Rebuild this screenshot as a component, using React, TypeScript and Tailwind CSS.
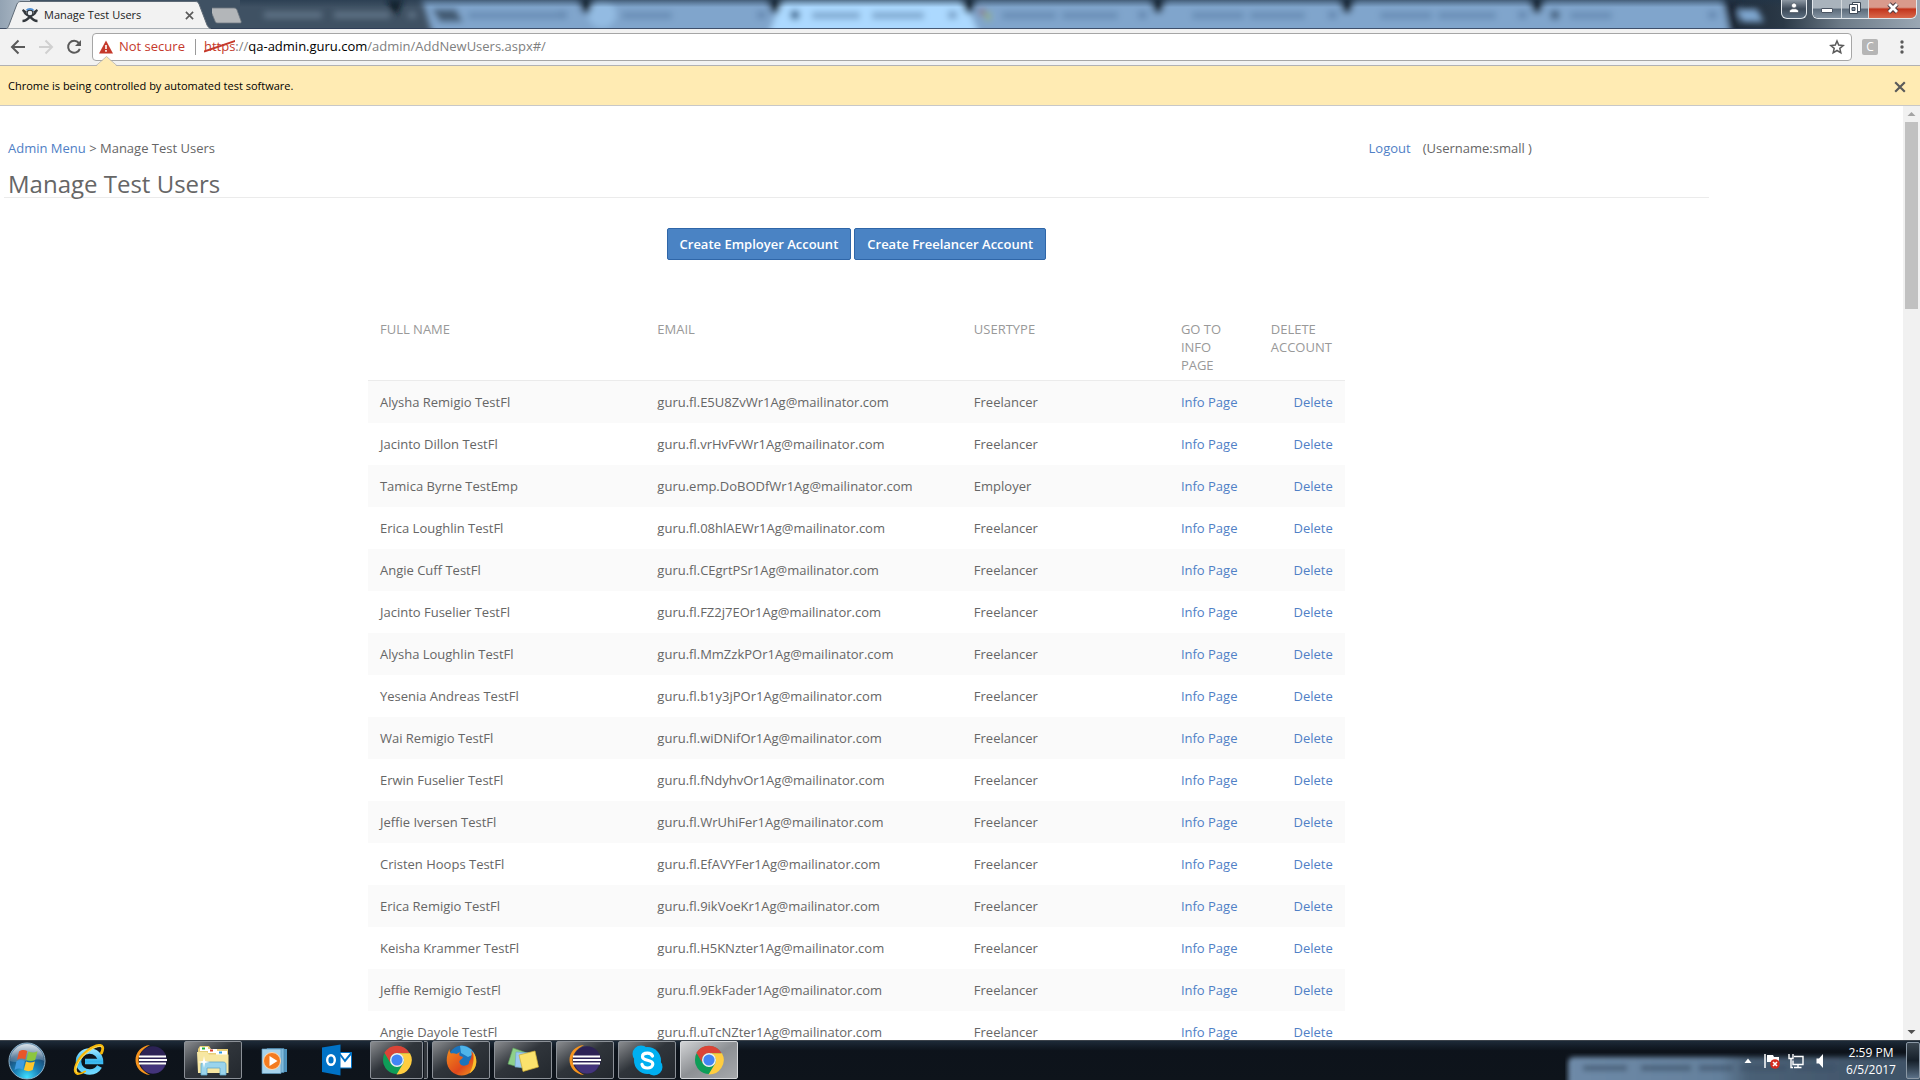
import React from "react";

type User = { name: string; email: string; type: string };

const users: User[] = [
  { name: "Alysha Remigio TestFl", email: "guru.fl.E5U8ZvWr1Ag@mailinator.com", type: "Freelancer" },
  { name: "Jacinto Dillon TestFl", email: "guru.fl.vrHvFvWr1Ag@mailinator.com", type: "Freelancer" },
  { name: "Tamica Byrne TestEmp", email: "guru.emp.DoBODfWr1Ag@mailinator.com", type: "Employer" },
  { name: "Erica Loughlin TestFl", email: "guru.fl.08hlAEWr1Ag@mailinator.com", type: "Freelancer" },
  { name: "Angie Cuff TestFl", email: "guru.fl.CEgrtPSr1Ag@mailinator.com", type: "Freelancer" },
  { name: "Jacinto Fuselier TestFl", email: "guru.fl.FZ2j7EOr1Ag@mailinator.com", type: "Freelancer" },
  { name: "Alysha Loughlin TestFl", email: "guru.fl.MmZzkPOr1Ag@mailinator.com", type: "Freelancer" },
  { name: "Yesenia Andreas TestFl", email: "guru.fl.b1y3jPOr1Ag@mailinator.com", type: "Freelancer" },
  { name: "Wai Remigio TestFl", email: "guru.fl.wiDNifOr1Ag@mailinator.com", type: "Freelancer" },
  { name: "Erwin Fuselier TestFl", email: "guru.fl.fNdyhvOr1Ag@mailinator.com", type: "Freelancer" },
  { name: "Jeffie Iversen TestFl", email: "guru.fl.WrUhiFer1Ag@mailinator.com", type: "Freelancer" },
  { name: "Cristen Hoops TestFl", email: "guru.fl.EfAVYFer1Ag@mailinator.com", type: "Freelancer" },
  { name: "Erica Remigio TestFl", email: "guru.fl.9ikVoeKr1Ag@mailinator.com", type: "Freelancer" },
  { name: "Keisha Krammer TestFl", email: "guru.fl.H5KNzter1Ag@mailinator.com", type: "Freelancer" },
  { name: "Jeffie Remigio TestFl", email: "guru.fl.9EkFader1Ag@mailinator.com", type: "Freelancer" },
  { name: "Angie Dayole TestFl", email: "guru.fl.uTcNZter1Ag@mailinator.com", type: "Freelancer" },
];

/* Glass title bar: another window's tabs seen out of focus behind it. */
function GlassBackdrop() {
  const notches = [395, 586, 775, 969, 1158, 1347, 1537];
  const smudges: [number, number][] = [
    [468, 90], [622, 50], [812, 48], [872, 52], [1002, 54], [1062, 56],
    [1192, 52], [1250, 55], [1380, 52], [1438, 58], [1570, 42],
  ];
  const closes = [562, 761, 952, 1142, 1332, 1522, 1712];
  return (
    <svg className="absolute inset-0 h-full w-full" viewBox="0 0 1920 29" preserveAspectRatio="none" aria-hidden="true">
      <defs>
        <filter id="soft" x="-5%" y="-50%" width="110%" height="200%">
          <feGaussianBlur stdDeviation="3" />
        </filter>
        <linearGradient id="glassEnd" x1="0" x2="1" y1="0" y2="0">
          <stop offset="0" stopColor="#1b2735" />
          <stop offset="0.3" stopColor="#2b3947" />
          <stop offset="0.6" stopColor="#6d7b88" />
          <stop offset="1" stopColor="#9aa7b4" />
        </linearGradient>
        <linearGradient id="glassTop" x1="0" x2="0" y1="0" y2="1">
          <stop offset="0" stopColor="#22364a" stopOpacity="0.6" />
          <stop offset="0.25" stopColor="#22364a" stopOpacity="0" />
        </linearGradient>
        <linearGradient id="glassStart" x1="0" x2="1" y1="0" y2="0">
          <stop offset="0" stopColor="#93a3b3" />
          <stop offset="1" stopColor="#b4c0cc" />
        </linearGradient>
      </defs>
      <rect width="1920" height="29" fill="#3f5163" />
      <rect width="30" height="29" fill="url(#glassStart)" />
      <rect x="1725" width="195" height="29" fill="url(#glassEnd)" />
      <g filter="url(#soft)">
        <path d="M421 -4H1721L1734 36H433Z" fill="#80a5cc" />
        <path d="M784 -4H962L980 36H768Z" fill="#acd9ff" />
        <ellipse cx="602" cy="14" rx="14" ry="14" fill="#93bbe2" />
        <path d="M432 9H456L463 22H440Z" fill="#425a72" />
        <path d="M1736 9H1757L1764 22H1742Z" fill="#7ea6cf" />
        {notches.map((x) => (
          <path key={x} d={`M${x - 9} -4H${x + 9}L${x + 3} 13H${x - 3}Z`} fill="#0f1a27" />
        ))}
        <path d="M1722 -4H1740L1736 34H1730Z" fill="#1b2735" />
        <rect x="264" y="12" width="58" height="6" fill="#6b7f93" opacity="0.8" />
        <rect x="334" y="12" width="56" height="6" fill="#6b7f93" opacity="0.8" />
        <rect x="408" y="12" width="8" height="6" fill="#6b7f93" opacity="0.8" />
        {smudges.map(([x, w]) => (
          <rect key={x} x={x} y="12" width={w} height="7" fill="#52779f" opacity="0.5" />
        ))}
        {closes.map((x) => (
          <rect key={x} x={x - 4} y="11" width="9" height="8" fill="#52779f" opacity="0.55" />
        ))}
        <circle cx="795" cy="15" r="5" fill="#3f6a93" />
        <circle cx="1555" cy="15" r="5" fill="#44617f" />
        <rect x="979" y="8" width="6" height="8" fill="#8a7f93" />
        <rect x="985" y="12" width="6" height="9" fill="#8fae8c" />
      </g>
      <rect x="240" width="1540" height="29" fill="url(#glassTop)" />
      <rect y="28" width="1920" height="1" fill="#2c3a52" opacity="0.8" />
    </svg>
  );
}

function Favicon() {
  return (
    <svg className="h-4 w-4" viewBox="0 0 16 16" fill="none" aria-hidden="true">
      <path d="M0.500 3L4 5.500M15.500 3L12 5.500" stroke="#33383d" strokeWidth="2.200" />
      <path d="M2 5C4 8 6 9 8 9S12 8 14 5" stroke="#33383d" strokeWidth="2" />
      <path d="M0.500 14C4 14 6 12 8 9.500C10 12 12 14 15.500 14" stroke="#33383d" strokeWidth="2.600" />
      <circle cx="8" cy="6" r="3" fill="#e9eef3" stroke="#33383d" strokeWidth="1.400" />
      <path d="M4.500 3.200C6 1.400 10 1.400 11.600 3.400" stroke="#4d8fd6" strokeWidth="1.600" />
    </svg>
  );
}

function Cross({ className }: { className: string }) {
  return (
    <svg className={className} viewBox="0 0 10 10" fill="none" stroke="currentColor" strokeWidth="1.800" aria-hidden="true">
      <path d="M1 1L9 9M9 1L1 9" />
    </svg>
  );
}

function TitleBar() {
  return (
    <header className="relative flex h-[29px] shrink-0 items-stretch justify-between overflow-hidden">
      <GlassBackdrop />
      <div className="relative flex">
        <div className="relative ml-1.5 flex h-full w-[206px] items-center pl-4 pr-[18px] pt-px">
          <svg className="absolute inset-0 h-full w-full" viewBox="0 0 206 29" preserveAspectRatio="none" aria-hidden="true">
            <path d="M0 29C2 28 2 27 3 25L11 4C12 2 13 1.500 15 1.500H189C191 1.500 192 2 193 4L201 25C202 27 203 28 205 29Z" fill="#f2f2f2" stroke="#5e6a76" strokeWidth="1" />
          </svg>
          <span className="relative flex flex-1 items-center gap-1.5 text-[11px] text-[#222]">
            <Favicon />
            Manage Test Users
          </span>
          <button type="button" aria-label="Close tab" className="relative text-[#5a5a5a]">
            <Cross className="h-[9px] w-[9px]" />
          </button>
        </div>
        <button type="button" aria-label="New tab" className="relative h-full w-8">
          <svg className="h-full w-full" viewBox="0 0 32 29" aria-hidden="true">
            <path d="M-1 8H22C24 8 24.500 9 25 10L29 21C29.500 22.500 29 23 28 23H6C4 23 3.500 22.500 3 21L-2 9Z" fill="#b3b6b9" stroke="#6e7780" strokeWidth="0.800" />
          </svg>
        </button>
      </div>
      <div className="relative mr-[3px] flex items-start gap-[5px]">
        <button type="button" aria-label="Profile" className="flex h-[19px] w-[26px] justify-center rounded-b-md border border-t-0 border-[#e3e8ec] bg-linear-to-b from-[#8d98a3] via-[#3d4a58] to-[#5c6e80] pt-0.5">
          <svg className="h-3 w-3" viewBox="0 0 12 12" fill="#fff" stroke="#3b4450" strokeWidth="0.600" aria-hidden="true">
            <circle cx="6" cy="3.500" r="2.500" />
            <path d="M1.500 10.500V8.500L4 6.800H8L10.500 8.500V10.500Z" />
          </svg>
        </button>
        <div className="flex h-[19px] overflow-hidden rounded-b-md border border-t-0 border-[#e3e8ec]">
          <button type="button" aria-label="Minimize" className="flex h-full w-[29px] justify-center border-r border-[#d5dade] bg-linear-to-b from-[#a9b3bc] from-45% via-[#5c6b7a] via-50% to-[#8494a3]">
            <svg className="h-[18px] w-4" viewBox="0 0 16 18" aria-hidden="true">
              <rect x="2.500" y="8.500" width="11" height="4" rx="0.500" fill="#fff" stroke="#4b5563" />
            </svg>
          </button>
          <button type="button" aria-label="Restore" className="flex h-full w-[27px] justify-center border-r border-[#d5dade] bg-linear-to-b from-[#a9b3bc] from-45% via-[#5c6b7a] via-50% to-[#8494a3]">
            <svg className="h-[18px] w-4" viewBox="0 0 16 18" stroke="#3f4a58" strokeWidth="1" aria-hidden="true">
              <path d="M5.500 2.500H13.500V11.500H5.500Z" fill="#fff" />
              <path d="M2.500 4.500H10.500V13.500H2.500Z" fill="#fff" />
              <path d="M5 7.500H8V10.500H5Z" fill="#8796a6" />
            </svg>
          </button>
          <button type="button" aria-label="Close" className="flex h-full w-[47px] justify-center bg-linear-to-b from-[#d99a8c] from-40% via-[#c2321a] via-50% to-[#d9674a]">
            <svg className="h-[18px] w-4" viewBox="0 0 16 18" fill="none" aria-hidden="true">
              <path d="M4 4L12 12M12 4L4 12" stroke="#4b3a40" strokeWidth="4.600" />
              <path d="M4 4L12 12M12 4L4 12" stroke="#fff" strokeWidth="2.800" />
            </svg>
          </button>
        </div>
      </div>
    </header>
  );
}

function Toolbar() {
  return (
    <nav className="flex h-[37px] shrink-0 items-center border-b border-[#b1b1b3] bg-[#f2f2f2] pl-1">
      <button type="button" aria-label="Back" className="flex w-7 justify-center">
        <svg className="h-4 w-4" viewBox="0 0 16 16" fill="none" stroke="#5a5a5a" strokeWidth="2" aria-hidden="true">
          <path d="M15 8H2.500M8.500 1.500L2 8L8.500 14.500" />
        </svg>
      </button>
      <button type="button" aria-label="Forward" className="flex w-7 justify-center" disabled>
        <svg className="h-4 w-4" viewBox="0 0 16 16" fill="none" stroke="#d0d0d0" strokeWidth="2" aria-hidden="true">
          <path d="M1 8H13.500M7.500 1.500L14 8L7.500 14.500" />
        </svg>
      </button>
      <button type="button" aria-label="Reload" className="mr-1 flex w-7 justify-center">
        <svg className="h-4 w-4" viewBox="0 0 16 16" fill="none" aria-hidden="true">
          <path d="M12.800 4A6 6 0 1 0 13.800 9.800" stroke="#5a5a5a" strokeWidth="2" />
          <path d="M15 1V7H9Z" fill="#5a5a5a" />
        </svg>
      </button>
      <div className="flex h-7 flex-1 items-center rounded-sm border border-[#a6a6a6] bg-white pl-1.5 text-[13px]">
        <svg className="h-3.5 w-3.5" viewBox="0 0 14 14" aria-hidden="true">
          <path d="M7 0.500L14 13.500H0Z" fill="#c5392b" />
          <path d="M6.200 5H7.800V9H6.200ZM6.200 10H7.800V11.800H6.200Z" fill="#fff" />
        </svg>
        <span className="ml-1.5 text-[#c5392b]">Not secure</span>
        <span className="ml-2.5 mr-2 h-4 w-px bg-[#9a9a9a]" />
        <label htmlFor="address" className="flex whitespace-nowrap text-[#808080]">
          <span className="relative text-[#c5392b]">
            https
            <svg className="absolute inset-0 h-full w-full" viewBox="0 0 32 20" preserveAspectRatio="none" aria-hidden="true">
              <path d="M0 15L32 4" stroke="#c5392b" strokeWidth="2" />
            </svg>
          </span>
          ://<span className="text-black">qa-admin.guru.com</span>
        </label>
        <input id="address" type="text" defaultValue="/admin/AddNewUsers.aspx#/" className="min-w-0 flex-1 bg-transparent text-[#808080] outline-none" />
        <button type="button" aria-label="Bookmark this page" className="mr-1.5">
          <svg className="h-4 w-4" viewBox="0 0 16 16" fill="none" stroke="#5a5a5a" strokeWidth="1.500" aria-hidden="true">
            <path d="M8 2L9.700 6.100L14.200 6.500L10.800 9.400L11.800 13.800L8 11.500L4.200 13.800L5.200 9.400L1.800 6.500L6.300 6.100Z" />
          </svg>
        </button>
      </div>
      <button type="button" className="ml-2.5 h-4 w-4 rounded-xs bg-[#b5b5b5] text-xs leading-4 text-white">C</button>
      <button type="button" aria-label="Menu" className="ml-4 mr-2.5 flex w-4 justify-center">
        <svg className="h-3.5 w-1" viewBox="0 0 4 14" fill="#5a5a5a" aria-hidden="true">
          <circle cx="2" cy="2" r="1.700" />
          <circle cx="2" cy="7" r="1.700" />
          <circle cx="2" cy="12" r="1.700" />
        </svg>
      </button>
    </nav>
  );
}

function InfoBar() {
  return (
    <div className="relative flex h-10 shrink-0 items-center justify-between border-b border-[#c8c8c8] bg-[#ffebb3] pl-2 pr-3.5 pt-0.5 text-[11px] text-black">
      <svg className="absolute -top-2.5 left-24 h-[11px] w-[21px]" viewBox="0 0 21 11" aria-hidden="true">
        <path d="M0 10.500L10.500 0.500L21 10.500V11H0Z" fill="#ffebb3" />
        <path d="M0 9.700L10.500 0.500L21 9.700" fill="none" stroke="#b8b3a6" strokeWidth="0.800" />
      </svg>
      <p>Chrome is being controlled by automated test software.</p>
      <button type="button" aria-label="Dismiss" className="text-[#5a5a5a]">
        <Cross className="h-3 w-3" />
      </button>
    </div>
  );
}

function UserTable() {
  const th = "px-3 pb-1.5 pt-1 text-left align-top font-normal uppercase";
  return (
    <table className="mx-auto mt-14 w-[57.3%] table-fixed border-collapse text-[13px] leading-[18px] text-[#666]">
      <colgroup>
        <col className="w-[28.4%]" />
        <col className="w-[32.4%]" />
        <col className="w-[21.2%]" />
        <col className="w-[9.2%]" />
        <col className="w-[8.8%]" />
      </colgroup>
      <thead>
        <tr className="border-b border-[#ebebeb] text-[#999]">
          <th className={th}>Full Name</th>
          <th className={th}>Email</th>
          <th className={th}>Usertype</th>
          <th className={th}>Go to Info Page</th>
          <th className="pb-1.5 pl-3 pt-1 text-left align-top font-normal uppercase">Delete Account</th>
        </tr>
      </thead>
      <tbody>
        {users.map((u) => (
          <tr key={u.email} className="odd:bg-[#fafafa]">
            <td className="p-3">{u.name}</td>
            <td className="p-3">{u.email}</td>
            <td className="p-3">{u.type}</td>
            <td className="whitespace-nowrap p-3">
              <a href="#info" className="text-[#5080c6]">Info Page</a>
            </td>
            <td className="p-3 text-right">
              <a href="#delete" className="text-[#5080c6]">Delete</a>
            </td>
          </tr>
        ))}
      </tbody>
    </table>
  );
}

function Page() {
  const button = "h-8 rounded-xs border border-[#2f66a8] bg-[#4a83c4] px-3 pt-0.5 text-[13px] font-semibold text-white";
  return (
    <main className="min-w-0 flex-1 overflow-hidden bg-white pt-[33px]">
      <div className="w-[90%] px-1">
        <div className="flex pl-1 text-[13px] leading-[18px] text-[#666]">
          <p className="w-[80%]">
            <a href="#menu" className="text-[#5080c6]">Admin Menu</a> &gt; Manage Test Users
          </p>
          <p className="flex gap-3 whitespace-nowrap">
            <a href="#logout" className="text-[#5080c6]">Logout</a>
            <span>(Username:small )</span>
          </p>
        </div>
        <h1 className="mt-3.5 border-b border-[#ebebeb] pl-1 text-2xl leading-[26px] text-[#666]">Manage Test Users</h1>
        <div className="mt-[30px] flex justify-center gap-[3px]">
          <button type="button" className={button}>Create Employer Account</button>
          <button type="button" className={button}>Create Freelancer Account</button>
        </div>
        <UserTable />
      </div>
    </main>
  );
}

function ScrollBar() {
  return (
    <div className="flex w-[17px] shrink-0 flex-col items-center bg-[#f1f1f1]" aria-hidden="true">
      <svg className="h-4 w-[17px]" viewBox="0 0 17 16">
        <path d="M8.500 6L12.500 10H4.500Z" fill="#a3a3a3" />
      </svg>
      <div className="h-[20%] w-[13px] bg-[#c1c1c1]" />
      <svg className="mt-auto h-[17px] w-[17px]" viewBox="0 0 17 17">
        <path d="M8.500 11L12.500 7H4.500Z" fill="#505050" />
      </svg>
    </div>
  );
}

function StartOrb() {
  return (
    <svg className="h-[38px] w-[38px]" viewBox="0 0 38 38" aria-hidden="true">
      <defs>
        <radialGradient id="orb" cx="0.5" cy="0.95" r="0.9">
          <stop offset="0" stopColor="#3fe0ff" />
          <stop offset="0.4" stopColor="#1a7fb5" />
          <stop offset="0.75" stopColor="#1b4a74" />
          <stop offset="1" stopColor="#5e84a3" />
        </radialGradient>
        <linearGradient id="orbShine" x1="0" y1="0" x2="0" y2="1">
          <stop offset="0" stopColor="#fff" stopOpacity="0.75" />
          <stop offset="1" stopColor="#fff" stopOpacity="0.15" />
        </linearGradient>
      </defs>
      <circle cx="19" cy="19" r="18" fill="url(#orb)" stroke="#8fb4cc" strokeWidth="1" />
      <path d="M2 19A17 17 0 0 1 36 19C28 14 10 23 2 19Z" fill="url(#orbShine)" />
      <path d="M11 9.500C14 7.500 16.500 7.600 19.300 9L17.200 17.500C14.500 16 12 16.200 9 17.800Z" fill="#e8552a" />
      <path d="M20.500 9.500C23.500 10.800 26 11 29.500 9.300L27.200 18C24 19.500 21.500 19.300 18.300 18Z" fill="#8cc63f" />
      <path d="M8.500 19.300C11.500 17.600 14 17.700 16.900 19L14.700 27.500C12 26.200 9.500 26.300 6.500 28Z" fill="#3f9be0" />
      <path d="M18 19.500C21 20.900 23.500 21 26.900 19.500L24.700 28C21.300 29.800 18.700 29.200 15.900 28Z" fill="#ffc62b" />
    </svg>
  );
}

function InternetExplorerIcon() {
  return (
    <svg className="h-8 w-8" viewBox="0 0 32 32" fill="none" aria-hidden="true">
      <defs>
        <linearGradient id="ie" x1="0" y1="0" x2="0" y2="1">
          <stop offset="0" stopColor="#8fe0ff" />
          <stop offset="0.5" stopColor="#35b4ee" />
          <stop offset="1" stopColor="#6fd8ff" />
        </linearGradient>
      </defs>
      <path d="M26.500 22.500C24.500 26 21 28 17 28A11 10.500 0 1 1 27.500 17.500H12" stroke="url(#ie)" strokeWidth="5.500" />
      <path d="M4.500 29.500C-1 27 4.500 15 13 8C20 2 28 -0.500 29.500 3C30 4.500 29.500 7 28.500 9" stroke="#f5b70a" strokeWidth="2.800" strokeLinecap="round" />
      <path d="M4.500 29.500C0 26 6 15 14 8.500C20 3.500 26 1.500 29 3" stroke="#ffe46b" strokeWidth="1" />
      <path d="M4.500 29.500C6.500 30.500 9.500 29 12 27.500" stroke="#f5b70a" strokeWidth="2" strokeLinecap="round" />
    </svg>
  );
}

function EclipseIcon() {
  return (
    <svg className="h-8 w-8" viewBox="0 0 32 32" aria-hidden="true">
      <path d="M15 1C6 2 0.500 8.500 0.500 16S6 30 15 31C8 27.500 3.500 22 3.500 16S8 4.500 15 1Z" fill="#f7941e" />
      <circle cx="18" cy="16" r="13.700" fill="#2c2255" />
      <path d="M6 21H30C28 26 24 29.500 18 29.500S8 26 6 21Z" fill="#43347b" />
      <path d="M4 11.500H31V13.500H4ZM4 15H32V17H4ZM4 18.500H31V20.500H4Z" fill="#fff" />
    </svg>
  );
}

function ExplorerIcon() {
  return (
    <svg className="h-8 w-[34px]" viewBox="0 0 34 32" aria-hidden="true">
      <path d="M2 5L4 2H13L15 5H32V29H2Z" fill="#e8cf7a" />
      <path d="M4 3H12V7H4Z" fill="#fff" />
      <path d="M6 3.500H9V5.500H6Z" fill="#1fae3a" />
      <path d="M12 5H21V9H12Z" fill="#fff" />
      <path d="M14 5.500H17V7.500H14Z" fill="#d9402b" />
      <path d="M20 7H31V11H20Z" fill="#fff" />
      <path d="M23 7.500H26V9.500H23Z" fill="#2a9be8" />
      <path d="M1 8H11L13 10.500H32.500V29H2Z" fill="#f7e7a2" />
      <path d="M5 31V21C5 19 6 18 8 18H27C29 18 30 19 30 21V31H24V24H11V31Z" fill="#9ad4ec" stroke="#5fa6c9" strokeWidth="0.800" />
      <path d="M8 12L9 17L14 18L9 19L8 24L7 19L2 18L7 17Z" fill="#fff" />
    </svg>
  );
}

function MediaPlayerIcon() {
  return (
    <svg className="h-7 w-7" viewBox="0 0 28 28" aria-hidden="true">
      <path d="M10 3H26V26H10Z" fill="#4f93bd" />
      <path d="M6 2.500H23V26.500H6Z" fill="#7fb9da" stroke="#4985ab" strokeWidth="0.700" />
      <path d="M1 3H20V27.500H1Z" fill="#a7d3ec" stroke="#5c97ba" strokeWidth="0.700" />
      <circle cx="11" cy="15" r="8.500" fill="#f47b20" stroke="#ffd9b0" strokeWidth="1" />
      <path d="M8.500 10L16.500 15L8.500 20Z" fill="#fff" />
    </svg>
  );
}

function OutlookIcon() {
  return (
    <svg className="h-8 w-[30px]" viewBox="0 0 30 32" aria-hidden="true">
      <path d="M17 8.500H29.500V24H17Z" fill="#fff" stroke="#0072c6" strokeWidth="1" />
      <path d="M17 9L23 17L29.500 9" fill="none" stroke="#0072c6" strokeWidth="2" />
      <path d="M0 3.500L18.500 0.500V31.500L0 28Z" fill="#0072c6" />
      <ellipse cx="9" cy="16" rx="3.800" ry="4.800" fill="none" stroke="#fff" strokeWidth="2.400" />
    </svg>
  );
}

function ChromeIcon() {
  return (
    <svg className="h-[30px] w-[30px]" viewBox="0 0 30 30" aria-hidden="true">
      <circle cx="15" cy="15" r="14" fill="#0f9d58" />
      <path d="M2.400 7.800A14.500 14.500 0 0 1 27.600 8.200H15A7.200 7.200 0 0 0 8.400 18Z" fill="#db4437" />
      <path d="M28 8.200A14.500 14.500 0 0 1 14.500 29.500L21.200 18.600A7.200 7.200 0 0 0 15 8.200Z" fill="#ffcd40" />
      <circle cx="15" cy="15" r="7" fill="#f1f1f1" />
      <circle cx="15" cy="15" r="5.600" fill="#4285f4" />
    </svg>
  );
}

function FirefoxIcon() {
  return (
    <svg className="h-[31px] w-[31px]" viewBox="0 0 31 31" aria-hidden="true">
      <defs>
        <linearGradient id="fox" x1="0" y1="0" x2="1" y2="1">
          <stop offset="0" stopColor="#f28c1c" />
          <stop offset="0.6" stopColor="#e0481c" />
          <stop offset="1" stopColor="#f0a21f" />
        </linearGradient>
      </defs>
      <circle cx="16" cy="14" r="13.500" fill="#1b74bd" />
      <path d="M14 1C20 0 26 4 28 9L22 12L15 8Z" fill="#4fb5ea" />
      <path d="M3.500 4C3.500 6 4 7.500 5 8.500C6.500 8 9 8 10.500 9L14 7C13 9 13 10 14 11L17 12C16.500 14 14 14.500 13.500 16C13 19 16 21.500 19 20.500C22 20 23.500 19 23 16.500C25.500 14 26.500 9 25 5.500C28.500 9 30.500 13 30.300 17C30 25 23 30.500 15.500 30.500S0.700 24 0.700 15.500C0.700 11 2 7 3.500 4Z" fill="url(#fox)" />
      <path d="M27 7C29.500 10 30.500 13 30.300 17C30 22 27.500 26 23.500 28.500C27 22 28.500 15 27 7Z" fill="#fbc02d" />
    </svg>
  );
}

function StickyNotesIcon() {
  return (
    <svg className="h-7 w-8" viewBox="0 0 32 28" aria-hidden="true">
      <path d="M6 2L20 7L15 22L1 18Z" fill="#8fd08a" stroke="#5fa65c" strokeWidth="0.600" />
      <path d="M9 6L23 7L22 22L8 21Z" fill="#9cc9ef" stroke="#6b9fca" strokeWidth="0.600" />
      <path d="M12 9L28 5L31.500 21L16 25.500Z" fill="#fbe26d" stroke="#cfae33" strokeWidth="0.700" />
    </svg>
  );
}

function SkypeIcon() {
  return (
    <svg className="h-[31px] w-[31px]" viewBox="0 0 31 31" aria-hidden="true">
      <circle cx="9" cy="9" r="8.500" fill="#00aff0" />
      <circle cx="22" cy="22" r="8.500" fill="#00aff0" />
      <circle cx="15.500" cy="15.500" r="13.500" fill="#00aff0" />
      <path d="M20.500 11C19.500 8.800 17.500 8.200 15.500 8.200C12.500 8.200 10.500 9.500 10.500 11.700C10.500 16.500 20.800 14 20.800 19C20.800 21.500 18.500 23 15.500 23C12.500 23 10.600 21.800 10 19.300" fill="none" stroke="#fff" strokeWidth="3.200" strokeLinecap="round" />
    </svg>
  );
}

type TaskState = "plain" | "open" | "active";

const taskStyle: Record<TaskState, string> = {
  plain: "border-transparent",
  open: "border-[#8b9097] bg-linear-to-br from-[#8b8d90] via-[#30353b] via-45% to-[#23282e]",
  active: "border-[#d5d7da] bg-linear-to-br from-[#d2d3d5] via-[#8d9094] via-50% to-[#a5a8ab]",
};

const tasks: { label: string; state: TaskState; icon: React.ReactNode; stacked?: boolean }[] = [
  { label: "Internet Explorer", state: "plain", icon: <InternetExplorerIcon /> },
  { label: "Eclipse", state: "plain", icon: <EclipseIcon /> },
  { label: "Windows Explorer", state: "open", icon: <ExplorerIcon /> },
  { label: "Media Player", state: "plain", icon: <MediaPlayerIcon /> },
  { label: "Outlook", state: "plain", icon: <OutlookIcon /> },
  { label: "Chrome", state: "open", icon: <ChromeIcon />, stacked: true },
  { label: "Firefox", state: "open", icon: <FirefoxIcon /> },
  { label: "Sticky Notes", state: "open", icon: <StickyNotesIcon /> },
  { label: "Eclipse workspace", state: "open", icon: <EclipseIcon /> },
  { label: "Skype", state: "open", icon: <SkypeIcon /> },
  { label: "Chrome, Manage Test Users", state: "active", icon: <ChromeIcon /> },
];

function TaskBar() {
  return (
    <footer className="relative flex h-10 shrink-0 items-stretch justify-between overflow-hidden border-t border-[#3c434b] bg-linear-to-b from-[#1d2a38] via-[#0d131b] via-25% to-[#0e141b]">
      <div className="flex">
        <button type="button" aria-label="Start" className="ml-2 mr-3.5 flex w-[38px] items-center justify-center">
          <StartOrb />
        </button>
        <ul className="flex gap-1">
          {tasks.map((t) => (
            <li key={t.label} className="flex w-[58px] gap-px pb-px">
              <button type="button" aria-label={t.label} className={`flex min-w-0 flex-1 items-center justify-center rounded-xs border ${taskStyle[t.state]}`}>
                {t.icon}
              </button>
              {t.stacked && <span className="w-1 rounded-r-xs border border-l-0 border-[#8b9097] bg-[#30353b]" />}
            </li>
          ))}
        </ul>
      </div>
      <div className="relative flex w-[355px] items-stretch justify-end">
        <svg className="absolute inset-0 h-full w-full" viewBox="0 0 355 39" preserveAspectRatio="none" aria-hidden="true">
          <defs>
            <filter id="traySoft">
              <feGaussianBlur stdDeviation="2.500" />
            </filter>
            <linearGradient id="tray" x1="0" x2="1" y1="0" y2="0">
              <stop offset="0" stopColor="#6e8aa8" />
              <stop offset="0.42" stopColor="#64809c" />
              <stop offset="0.5" stopColor="#4a6076" />
              <stop offset="1" stopColor="#3d5165" />
            </linearGradient>
          </defs>
          <g filter="url(#traySoft)">
            <path d="M3 50V22Q3 16 9 16H365V50Z" fill="url(#tray)" />
            <path d="M18 27H62M76 27H126M134 27H168M175 27H222M230 27H270" stroke="#3b4f66" strokeWidth="6" opacity="0.600" />
          </g>
        </svg>
        <div className="relative flex items-center">
          <button type="button" aria-label="Show hidden icons" className="mr-3">
            <svg className="h-2 w-2" viewBox="0 0 8 8" aria-hidden="true">
              <path d="M4 1.500L7.500 6H0.500Z" fill="#fff" />
            </svg>
          </button>
          <button type="button" aria-label="Action Center" className="mr-2">
            <svg className="h-4 w-4" viewBox="0 0 16 16" aria-hidden="true">
              <path d="M1 1V15" stroke="#fff" strokeWidth="1.500" />
              <path d="M3 2H9L10 4H15V9H3Z" fill="#fff" />
              <circle cx="11" cy="11" r="4.800" fill="#d42a1e" />
              <path d="M9 9L13 13M13 9L9 13" stroke="#fff" strokeWidth="1.600" />
            </svg>
          </button>
          <button type="button" aria-label="Network" className="mr-3">
            <svg className="h-4 w-4" viewBox="0 0 16 16" fill="none" stroke="#fff" aria-hidden="true">
              <path d="M6 3.500H15V11.500H5V7.500" strokeWidth="1.400" />
              <path d="M1 1V5.500H5V1M3 5.500V14.500H5M10 11.500V14M6 14.500H13.500" strokeWidth="1.400" />
            </svg>
          </button>
          <button type="button" aria-label="Volume" className="mr-[22px]">
            <svg className="h-4 w-2" viewBox="0 0 8 16" fill="#fff" aria-hidden="true">
              <path d="M0.500 5.500H3L7 1V15L3 10.500H0.500Z" />
            </svg>
          </button>
          <div className="mr-2.5 w-[50px] whitespace-nowrap text-center text-xs leading-[17px] text-white">
            <p>2:59 PM</p>
            <p>6/5/2017</p>
          </div>
        </div>
        <button type="button" aria-label="Show desktop" className="relative my-px w-3.5 rounded-xs border border-[#8b98a5] bg-linear-to-b from-[#3b4650] via-[#16202a] to-[#5b7188]" />
      </div>
    </footer>
  );
}

export default function App() {
  return (
    <div className="flex h-screen flex-col overflow-hidden bg-white font-['Open_Sans',sans-serif]">
      <TitleBar />
      <Toolbar />
      <InfoBar />
      <div className="flex min-h-0 flex-1">
        <Page />
        <ScrollBar />
      </div>
      <TaskBar />
    </div>
  );
}
